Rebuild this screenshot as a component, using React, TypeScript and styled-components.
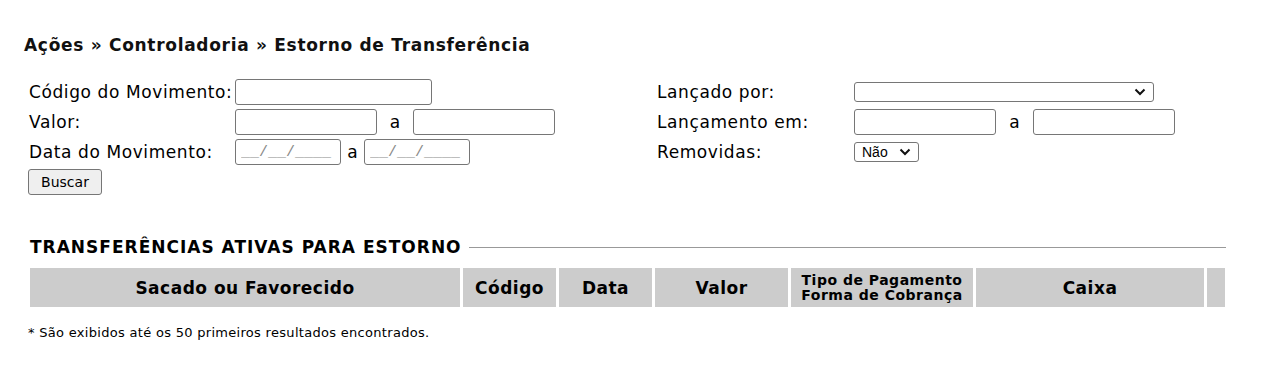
import React from "react"
import styled, { createGlobalStyle } from "styled-components"

const GlobalStyle = createGlobalStyle`
  body {
    margin: 0;
    background: #fff;
    color: #000;
    font-family: "DejaVu Sans", Verdana, sans-serif;
  }
`

const Chevron = () => (
  <ChevronIcon viewBox="0 0 12 8" width="12" height="8">
    <path d="M1.5 1.5 L6 6 L10.5 1.5" fill="none" stroke="#111" strokeWidth="2" />
  </ChevronIcon>
)

export default function App() {
  return (
    <>
      <GlobalStyle />
      <Page>
        <Title>Ações » Controladoria » Estorno de Transferência</Title>

        <FilterGrid>
          <Label>Código do Movimento:</Label>
          <Field>
            <TextInput $width={197} />
          </Field>
          <Label>Lançado por:</Label>
          <Field>
            <SelectBox $width={300}>
              <Select>
                <option></option>
              </Select>
              <Chevron />
            </SelectBox>
          </Field>

          <Label>Valor:</Label>
          <Field>
            <TextInput $width={142} />
            <Sep $space={36}>a</Sep>
            <TextInput $width={142} />
          </Field>
          <Label>Lançamento em:</Label>
          <Field>
            <TextInput $width={142} />
            <Sep $space={37}>a</Sep>
            <TextInput $width={142} />
          </Field>

          <Label>Data do Movimento:</Label>
          <Field>
            <DateInput placeholder="__/__/____" />
            <Sep $space={23}>a</Sep>
            <DateInput placeholder="__/__/____" />
          </Field>
          <Label>Removidas:</Label>
          <Field>
            <SelectBox $width={65}>
              <Select>
                <option>Não</option>
                <option>Sim</option>
              </Select>
              <Chevron />
            </SelectBox>
          </Field>

          <ButtonCell>
            <Button>Buscar</Button>
          </ButtonCell>
        </FilterGrid>

        <SectionTitle>
          <span>TRANSFERÊNCIAS ATIVAS PARA ESTORNO</span>
          <Rule />
        </SectionTitle>

        <HeaderRow>
          <HeadCell>Sacado ou Favorecido</HeadCell>
          <HeadCell>Código</HeadCell>
          <HeadCell>Data</HeadCell>
          <HeadCell>Valor</HeadCell>
          <HeadCell $small>
            Tipo de Pagamento
            <br />
            Forma de Cobrança
          </HeadCell>
          <HeadCell>Caixa</HeadCell>
          <HeadCell />
        </HeaderRow>

        <Note>* São exibidos até os 50 primeiros resultados encontrados.</Note>
      </Page>
    </>
  )
}

/**
 * Styled components
 */

const Page = styled("div")`
  width: 1278px;
  height: 379px;
  padding: 34px 0 0 24px;
  box-sizing: border-box;
  overflow: hidden;
`

const Title = styled("h1")`
  margin: 0;
  font-size: 17px;
  letter-spacing: 0.7px;
  font-weight: bold;
  line-height: 22px;
  color: #111;
`

const FilterGrid = styled("div")`
  display: grid;
  grid-template-columns: 206px 422px 197px auto;
  grid-auto-rows: 30px;
  align-items: center;
  margin: 21px 0 0 5px;
`

const Label = styled("div")`
  font-size: 17px;
  letter-spacing: 0.6px;
  white-space: nowrap;
`

const Field = styled("div")`
  display: flex;
  align-items: center;
`

const TextInput = styled("input")<{ $width: number }>`
  width: ${p => p.$width}px;
  height: 26px;
  box-sizing: border-box;
  border: 1px solid #767676;
  border-radius: 3px;
  padding: 1px 4px;
  font-family: "DejaVu Sans", sans-serif;
  font-size: 13px;
  background: #fff;
`

const DateInput = styled("input")`
  width: 106px;
  height: 26px;
  box-sizing: border-box;
  border: 1px solid #767676;
  border-radius: 3px;
  padding: 1px 5px;
  font-family: "Liberation Mono", monospace;
  font-size: 15px;
  background: #fff;

  &::placeholder {
    color: #8a8a8a;
  }
`

const Sep = styled("span")<{ $space: number }>`
  width: ${p => p.$space}px;
  text-align: center;
  font-size: 17px;
`

const SelectBox = styled("div")<{ $width: number }>`
  position: relative;
  width: ${p => p.$width}px;
  height: 20px;
`

const Select = styled("select")`
  appearance: none;
  width: 100%;
  height: 100%;
  box-sizing: border-box;
  border: 1px solid #767676;
  border-radius: 3px;
  font-family: "Liberation Sans", Arial, sans-serif;
  font-size: 14px;
  color: #000;
  background: #fff;
  padding: 0 0 0 7px;
`

const ChevronIcon = styled("svg")`
  position: absolute;
  right: 8px;
  top: 6px;
  pointer-events: none;
`

const ButtonCell = styled("div")`
  grid-column: 1 / -1;
  display: flex;
  align-items: center;
  margin-left: -1px;
`

const Button = styled("button")`
  width: 74px;
  height: 26px;
  border: 1px solid #767676;
  border-radius: 3px;
  background: #efefef;
  font-family: "DejaVu Sans", sans-serif;
  font-size: 14px;
  color: #000;
  padding: 0;
`

const SectionTitle = styled("div")`
  display: flex;
  align-items: center;
  gap: 7px;
  width: 1196px;
  margin: 40px 0 0 6px;
  font-family: "DejaVu Sans", Tahoma, sans-serif;
  font-weight: bold;
  font-size: 17px;
  letter-spacing: 1px;
  line-height: 20px;
  color: #000;
  white-space: nowrap;
`

const Rule = styled("div")`
  flex: 1;
  height: 0;
  border-top: 1px solid #999;
  margin-top: 1px;
`

const HeaderRow = styled("div")`
  display: grid;
  grid-template-columns: 430px 93px 93px 133px 182px 228px 18px;
  gap: 3px;
  height: 39px;
  margin: 11px 0 0 6px;
`

const HeadCell = styled("div")<{ $small?: boolean }>`
  display: flex;
  align-items: center;
  justify-content: center;
  text-align: center;
  background: #ccc;
  font-family: "DejaVu Sans", Tahoma, sans-serif;
  font-weight: bold;
  font-size: ${p => (p.$small ? "14px" : "17px")};
  letter-spacing: ${p => (p.$small ? "0.5px" : "0.5px")};
  line-height: ${p => (p.$small ? "15px" : "20px")};
  white-space: nowrap;
  color: #000;
`

const Note = styled("p")`
  margin: 18px 0 0 4px;
  font-family: "DejaVu Sans", Tahoma, sans-serif;
  font-size: 13px;
  letter-spacing: 0.3px;
  line-height: 16px;
  color: #000;
`
